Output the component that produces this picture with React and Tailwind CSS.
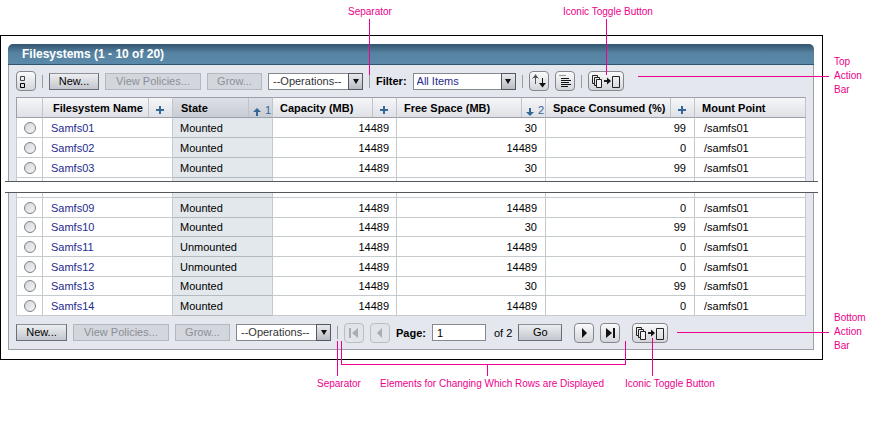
const TOP_ROWS = [
  ["Samfs01", "Mounted", 14489, 30, 99],
  ["Samfs02", "Mounted", 14489, 14489, 0],
  ["Samfs03", "Mounted", 14489, 30, 99],
];

const BOTTOM_ROWS = [
  ["Samfs09", "Mounted", 14489, 14489, 0],
  ["Samfs10", "Mounted", 14489, 30, 99],
  ["Samfs11", "Unmounted", 14489, 14489, 0],
  ["Samfs12", "Unmounted", 14489, 14489, 0],
  ["Samfs13", "Mounted", 14489, 30, 99],
  ["Samfs14", "Mounted", 14489, 14489, 0],
];

function Separator() {
  return <span className="h-[13px] w-px shrink-0 bg-[#9a9fa6]" />;
}

function TextButton({ children, className, disabled }) {
  return (
    <button
      type="button"
      disabled={disabled}
      className={`flex h-[17px] shrink-0 items-center justify-center border text-[11px] leading-none ${
        disabled
          ? "border-[#b3b7be] bg-[#d3d6dd] text-[#8b8f96]"
          : "border-[#6b6e74] border-t-[#8f9299] bg-linear-to-b from-[#eceef1] to-[#c3c6cd] text-black"
      } ${className}`}
    >
      {children}
    </button>
  );
}

function IconButton({ label, children, className = "w-5", disabled }) {
  return (
    <button
      type="button"
      aria-label={label}
      disabled={disabled}
      className={`flex h-5 shrink-0 items-center justify-center rounded-[4px] border ${
        disabled
          ? "border-[#b9bdc4] bg-[#e1e4e9] text-[#a9adb3]"
          : "border-[#84888e] bg-linear-to-b from-[#fafafb] to-[#d3d5da] text-[#111]"
      } ${className}`}
    >
      {children}
    </button>
  );
}

function Dropdown({ label, id, value, className, textClass }) {
  return (
    <span className={`relative h-[17px] shrink-0 ${className}`}>
      <select
        id={id}
        aria-label={label}
        defaultValue={value}
        className={`block h-full w-full appearance-none border border-[#85898f] bg-white pr-4 text-[11px] leading-none ${textClass}`}
      >
        <option>{value}</option>
      </select>
      <span className="pointer-events-none absolute inset-y-0 right-0 flex w-[15px] items-center justify-center border border-[#55595f] bg-linear-to-b from-[#e8eaed] to-[#b9bcc3]">
        <svg width="6" height="5" viewBox="0 0 6 5">
          <path d="M0 0h6L3 5z" fill="#111" />
        </svg>
      </span>
    </span>
  );
}

function SelectIcon() {
  return (
    <svg width="18" height="18" viewBox="0 0 18 18" fill="none" className="shrink-0">
      <path d="M3.5 4.5h4v4h-4z" stroke="#444" />
      <path d="M3.5 11.5h4v4h-4z" stroke="#000" />
    </svg>
  );
}

function SortIcon() {
  return (
    <svg width="18" height="18" viewBox="0 0 18 18" fill="none" className="shrink-0">
      <path d="M5.5 12V3M2.5 6.5l3-3 3 3" stroke="#555" />
      <path d="M5.5 2L8 6H3z" fill="#555" />
      <path d="M12.5 6v8" stroke="#111" />
      <path d="M9 11h7l-3.5 4.5z" fill="#111" />
    </svg>
  );
}

function ListIcon() {
  return (
    <svg width="18" height="18" viewBox="0 0 18 18" fill="none" className="shrink-0">
      <path d="M3 3.5h7" stroke="#999" />
      <path d="M5 6.5h8M5 8.5h10M5 10.5h8M5 12.5h10M5 14.5h7" stroke="#111" />
    </svg>
  );
}

function PagesIcon() {
  return (
    <svg width="34" height="18" viewBox="0 0 34 18" fill="none" stroke="#222" className="shrink-0">
      <path d="M5 11.5H3.500v-8h5V5" />
      <path d="M7 13.500H5.500v-8h5V7" />
      <path d="M7.500 7.500h5v8h-5z" fill="#f2f2f4" />
      <path d="M15 9h5" strokeWidth="2" />
      <path d="M18 5.500L22 9l-4 3.500z" fill="#111" stroke="none" />
      <path d="M23.500 4.500h7v11h-7z" />
    </svg>
  );
}

function PageArrow({ flip, bar }) {
  return (
    <svg
      width="18"
      height="18"
      viewBox="0 0 18 18"
      fill="currentColor"
      className={flip ? "shrink-0 -scale-x-100" : "shrink-0"}
    >
      <path d={bar ? "M5 4l6 5-6 5z" : "M7 4l5 5-5 5z"} />
      {bar && <path d="M12 4h2v10h-2z" />}
    </svg>
  );
}

function ActionButtons({ newClass }) {
  return (
    <>
      <TextButton className={newClass}>New...</TextButton>
      <TextButton className="w-24" disabled>
        View Policies...
      </TextButton>
      <TextButton className="w-[55px]" disabled>
        Grow...
      </TextButton>
      <Dropdown
        label="Operations"
        value="--Operations--"
        className="w-[95px]"
        textClass="pl-1 text-[#333]"
      />
    </>
  );
}

function SortMark({ kind }) {
  if (kind === "add") {
    return (
      <svg width="8" height="8" viewBox="0 0 8 8" className="mx-auto mt-1">
        <path d="M3 0h2v3h3v2H5v3H3V5H0V3h3z" fill="#336699" />
      </svg>
    );
  }
  const up = kind === "up";
  return (
    <>
      <svg width="8" height="8" viewBox="0 0 8 8" className="mt-2">
        <path d={up ? "M4 0l4 4H5v4H3V4H0z" : "M4 8L0 4h3V0h2v4h3z"} fill="#336699" />
      </svg>
      <span className="mt-1 font-normal text-[#336699]">{up ? "1" : "2"}</span>
    </>
  );
}

function HeadCell({ children, kind, sorted, className = "pl-[7px]" }) {
  return (
    <th
      scope="col"
      className={`border-y border-r border-y-[#9a9fa8] border-r-[#c0c4cb] p-0 text-left font-bold ${
        sorted
          ? "bg-linear-to-b from-[#dcdfe5] to-[#c9cdd5]"
          : "bg-linear-to-b from-[#f6f6f8] to-[#dfe1e6]"
      }`}
    >
      <div className="flex h-[19px] items-center">
        <span className={`grow whitespace-nowrap ${className}`}>{children}</span>
        {kind && (
          <span className="flex h-full w-6 shrink-0 items-center justify-end gap-1 border-l border-[#c0c4cb] pr-px">
            <SortMark kind={kind} />
          </span>
        )}
      </div>
    </th>
  );
}

const CELL = "border-r border-b border-[#c5cacd] bg-white p-0";
const STATE_CELL = "border-r border-b border-[#c5cacd] border-b-[#b4babf] bg-[#e3e8ec] p-0";

function Columns() {
  return (
    <colgroup>
      <col className="w-[27px]" />
      <col className="w-[130px]" />
      <col className="w-[100px]" />
      <col className="w-[124px]" />
      <col className="w-[149px]" />
      <col className="w-[149px]" />
      <col />
    </colgroup>
  );
}

function Row({ row, className = "h-5" }) {
  const [name, state, capacity, free, used] = row;
  return (
    <tr className={className}>
      <td className={`${CELL} border-l`}>
        <input
          type="radio"
          name="filesystem"
          aria-label={name}
          className="mx-auto block size-3 appearance-none rounded-full border border-[#7d8187] bg-linear-to-br from-[#d3d6da] to-[#f4f5f6]"
        />
      </td>
      <td className={`${CELL} pl-2`}>
        <a href={`#${name}`} className="text-[#1f2b8f]">
          {name}
        </a>
      </td>
      <td className={`${STATE_CELL} pl-[7px]`}>{state}</td>
      <td className={`${CELL} pr-[7px] text-right`}>{capacity}</td>
      <td className={`${CELL} pr-2 text-right`}>{free}</td>
      <td className={`${CELL} pr-2 text-right`}>{used}</td>
      <td className={`${CELL} pl-[9px]`}>/samfs01</td>
    </tr>
  );
}

function CutRow({ className }) {
  return (
    <tr className={className}>
      <td className={`${CELL} border-l`} />
      <td className={CELL} />
      <td className={STATE_CELL} />
      <td className={CELL} />
      <td className={CELL} />
      <td className={CELL} />
      <td className={CELL} />
    </tr>
  );
}

function Line({ className }) {
  return <span className={`absolute bg-[#ec008c] ${className}`} />;
}

function Note({ className, children }) {
  return (
    <span className={`absolute text-[10px] leading-[14px] whitespace-nowrap text-[#ec008c] ${className}`}>
      {children}
    </span>
  );
}

function Callouts() {
  return (
    <div className="pointer-events-none">
      <Note className="top-[5px] left-[348px]">Separator</Note>
      <Line className="top-[19px] left-[369px] h-14 w-px" />
      <Note className="top-[5px] left-[563px]">Iconic Toggle Button</Note>
      <Line className="top-[19px] left-[606px] h-14 w-px" />

      <Line className="top-[76px] right-[54px] left-[638px] h-px" />
      <Note className="top-[55px] right-0 w-[49px]">
        Top
        <br />
        Action
        <br />
        Bar
      </Note>
      <Line className="top-[332px] right-[54px] left-[677px] h-px" />
      <Note className="top-[311px] right-0 w-[49px]">
        Bottom
        <br />
        Action
        <br />
        Bar
      </Note>

      <Line className="top-[341px] left-[337px] h-[35px] w-px" />
      <Note className="top-[377px] left-[317px]">Separator</Note>
      <span className="absolute top-[341px] left-[341px] h-6 w-[285px] border border-t-0 border-[#ec008c]" />
      <Line className="top-[365px] left-[487px] h-[11px] w-px" />
      <Note className="top-[377px] left-[380px]">Elements for Changing Which Rows are Displayed</Note>
      <Line className="top-[338px] left-[652px] h-[38px] w-px" />
      <Note className="top-[377px] left-[625px]">Iconic Toggle Button</Note>
    </div>
  );
}

export default function App() {
  return (
    <div className="relative bg-white pt-[35px] pb-[61px] font-['Liberation_Sans',Arial,sans-serif] text-[11px] leading-4 text-black">
      <main className="mr-[60px] border border-black pt-2 pr-2 pb-[9px] pl-[7px]">
        <h1 className="h-[21px] rounded-t-[5px] border-b border-[#2f5470] bg-linear-to-b from-[#33556e] via-[#5783a2] via-45% to-[#5b89a9] pl-3.5 text-[12px] leading-[21px] font-bold text-white">
          Filesystems (1 - 10 of 20)
        </h1>

        <section className="border-x border-[#9a9fa8] bg-[#e4e7ed] px-[7px]">
          <div className="flex h-8 items-center gap-1.5">
            <IconButton label="Select rows">
              <SelectIcon />
            </IconButton>
            <Separator />
            <ActionButtons newClass="w-[50px]" />
            <Separator />
            <label htmlFor="filter" className="font-bold">
              Filter:
            </label>
            <Dropdown
              id="filter"
              label="Filter"
              value="All Items"
              className="w-[103px]"
              textClass="pl-[3px] text-[#1f2b8f]"
            />
            <Separator />
            <IconButton label="Sort">
              <SortIcon />
            </IconButton>
            <IconButton label="Show list">
              <ListIcon />
            </IconButton>
            <Separator />
            <IconButton label="Toggle paging" className="w-9">
              <PagesIcon />
            </IconButton>
          </div>
          <table className="w-full table-fixed border-separate border-spacing-0">
            <Columns />
            <thead>
              <tr>
                <th
                  aria-label="Selection"
                  className="border border-[#9a9fa8] border-r-[#c0c4cb] bg-linear-to-b from-[#f6f6f8] to-[#dfe1e6] p-0"
                />
                <HeadCell kind="add" className="pl-2.5">
                  Filesystem Name
                </HeadCell>
                <HeadCell kind="up" sorted className="pl-2">
                  State
                </HeadCell>
                <HeadCell kind="add">Capacity (MB)</HeadCell>
                <HeadCell kind="down">Free Space (MB)</HeadCell>
                <HeadCell kind="add">Space Consumed (%)</HeadCell>
                <HeadCell>Mount Point</HeadCell>
              </tr>
            </thead>
            <tbody>
              {TOP_ROWS.map((row) => (
                <Row key={row[0]} row={row} />
              ))}
              <CutRow className="h-[3px] *:border-b-0" />
            </tbody>
          </table>
        </section>

        <div className="-mr-1 -ml-[3px] h-3 border-y border-[#55585c] bg-white" />

        <section className="border-x border-b border-[#9a9fa8] bg-[#e4e7ed] px-[7px]">
          <table className="w-full table-fixed border-separate border-spacing-0">
            <Columns />
            <tbody>
              <CutRow className="h-[5px]" />
              {BOTTOM_ROWS.map((row) => (
                <Row key={row[0]} row={row} className="h-5 nth-[3n]:h-[19px]" />
              ))}
            </tbody>
          </table>
          <div className="flex h-[33px] items-center gap-1.5">
            <ActionButtons newClass="w-[51px]" />
            <Separator />
            <IconButton label="First page" disabled>
              <PageArrow flip bar />
            </IconButton>
            <IconButton label="Previous page" disabled>
              <PageArrow flip />
            </IconButton>
            <label htmlFor="page" className="font-bold">
              Page:
            </label>
            <input
              id="page"
              type="text"
              defaultValue="1"
              className="h-[17px] w-[54px] border border-[#85898f] bg-white px-1"
            />
            <span className="pl-0.5">of 2</span>
            <TextButton className="w-11">Go</TextButton>
            <div className="flex gap-1.5 px-1.5">
              <IconButton label="Next page">
                <PageArrow />
              </IconButton>
              <IconButton label="Last page">
                <PageArrow bar />
              </IconButton>
            </div>
            <IconButton label="Toggle paging" className="w-9">
              <PagesIcon />
            </IconButton>
          </div>
        </section>
      </main>
      <Callouts />
    </div>
  );
}
